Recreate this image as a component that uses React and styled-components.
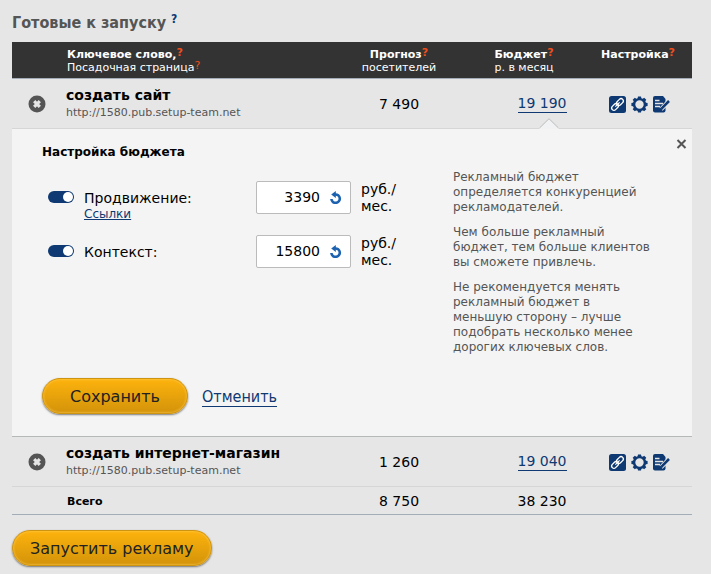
import React, { useState } from 'react'
import styled, { createGlobalStyle } from 'styled-components'

const GlobalStyle = createGlobalStyle`
  * {
    box-sizing: border-box;
  }
  body {
    background: #e6e6e6;
    color: #000;
    font-family: Verdana, 'DejaVu Sans', sans-serif;
    font-size: 14px;
    margin: 0;
  }
  button,
  input {
    font-family: inherit;
  }
`

const Page = styled.main`
  padding: 12px 19px 8px 12px;
`

const Title = styled.h1`
  color: #555;
  display: flex;
  font-family: Tahoma, 'DejaVu Sans Condensed', 'DejaVu Sans', sans-serif;
  font-size: 16px;
  gap: 5px;
  line-height: 22px;
  margin: 0 0 8px;
`

const TitleHelp = styled.sup`
  color: #0e3972;
  font-size: 12px;
  line-height: 14px;
`

const Help = styled.sup`
  color: #f04e1c;
  font-size: 11px;
  line-height: 0;
  vertical-align: 2px;
`

const Table = styled.table`
  border-collapse: collapse;
  table-layout: fixed;
  width: 100%;
`

const Col = styled.col`
  width: ${({ $width }) => $width};
`

const HeadCell = styled.th`
  background: #333;
  border-bottom: 1px solid #a3adb7;
  color: #fff;
  font-size: 11px;
  font-weight: bold;
  height: 36px;
  line-height: 13px;
  padding: 6px 0 0 ${({ $left }) => ($left ? '1px' : '0')};
  text-align: ${({ $left }) => ($left ? 'left' : 'center')};
  vertical-align: top;
  white-space: nowrap;
`

const SubHead = styled.div`
  font-weight: normal;
`

const Cell = styled.td`
  border-bottom: 1px solid ${({ $line }) => $line || '#d6d6d6'};
  height: ${({ $short }) => ($short ? '28px' : '50px')};
  padding: 2px 0 0 ${({ $budget }) => ($budget ? '36px' : '0')};
  position: relative;
  text-align: ${({ $left }) => ($left ? 'left' : 'center')};
  white-space: nowrap;
`

const Keyword = styled.div`
  font-size: 14px;
  font-weight: bold;
  line-height: 18px;
`

const PageUrl = styled.div`
  color: #555;
  font-size: 11px;
  line-height: 18px;
`

const TotalLabel = styled.div`
  font-size: 11px;
  font-weight: bold;
  padding-left: 1px;
`

const IconButton = styled.button`
  background: none;
  border: 0;
  cursor: pointer;
  display: block;
  padding: 0;
  > svg {
    display: block;
  }
`

const RemoveButton = styled(IconButton)`
  margin-left: 16px;
`

const Tools = styled.div`
  display: flex;
  gap: 5px;
  justify-content: center;
  padding-left: 3px;
`

const BudgetLink = styled.a`
  border-bottom: 1px solid #0e3972;
  color: #0e3972;
  display: inline-block;
  line-height: 17px;
  text-decoration: none;
`

const Pointer = styled.svg`
  bottom: -1px;
  display: block;
  left: 50%;
  margin-left: 15px;
  position: absolute;
`

const PanelCell = styled.td`
  background: #f4f4f4;
  border-bottom: 1px solid #b4b8b6;
  padding: 0;
`

const Panel = styled.form`
  padding: 10px 5px 22px 30px;
`

const PanelHead = styled.div`
  display: flex;
  justify-content: space-between;
`

const PanelTitle = styled.h2`
  font-size: 12px;
  line-height: 16px;
  margin: 5px 0 0;
`

const CloseButton = styled(IconButton)`
  height: 10px;
`

const PanelBody = styled.div`
  display: flex;
  gap: 46px;
  margin-top: 10px;
`

const Fields = styled.div`
  display: flex;
  flex-direction: column;
  gap: 14px;
  padding: 11px 0 0 6px;
  width: 365px;
`

const Field = styled.div`
  display: grid;
  grid-template-columns: 36px 172px 95px 1fr;
`

const Toggle = styled.input`
  appearance: none;
  background: #0e3972;
  border-radius: 6px;
  cursor: pointer;
  height: 12px;
  margin: 10px 0 0;
  padding: 1px;
  width: 26px;
  &::before {
    background: #fff;
    border-radius: 50%;
    content: '';
    display: block;
    height: 10px;
    margin-left: 0;
    width: 10px;
  }
  &:checked::before {
    margin-left: 14px;
  }
  &:not(:checked) {
    background: #999;
  }
`

const FieldName = styled.div`
  line-height: 17px;
  padding-top: 9px;
`

const SmallLink = styled.a`
  color: #0e3972;
  display: block;
  font-size: 12px;
  line-height: 14px;
`

const AmountBox = styled.div`
  align-items: center;
  background: #fff;
  border: 1px solid #bbb;
  border-radius: 2px;
  display: flex;
  gap: 10px;
  height: 33px;
  padding-right: 8px;
`

const Amount = styled.input`
  background: none;
  border: 0;
  flex: 1;
  font-size: 14px;
  min-width: 0;
  outline: none;
  padding: 0;
  text-align: right;
`

const Unit = styled.div`
  line-height: 17px;
  padding-left: 10px;
`

const Hints = styled.div`
  color: #555;
  flex: 1;
  font-size: 12px;
  line-height: 15px;
  max-width: 198px;
  > p {
    margin: 0 0 10px;
  }
`

const Actions = styled.div`
  align-items: center;
  display: flex;
  gap: 14px;
  margin-top: 13px;
`

const YellowButton = styled.button`
  background: linear-gradient(#fdb30d, #d3930a);
  border: 1px solid #cf940f;
  border-radius: 18px;
  box-shadow: 0 1px 2px rgba(0, 0, 0, 0.5), inset 0 0 2px 1px rgba(255, 205, 90, 0.5);
  color: #222;
  cursor: pointer;
  font-size: 16px;
  height: 36px;
  padding: 2px ${({ $wide }) => ($wide ? '27px' : '17px')} 0;
`

const CancelLink = styled.a`
  border-bottom: 1px solid #0e3972;
  color: #0e3972;
  font-family: Tahoma, 'DejaVu Sans Condensed', 'DejaVu Sans', sans-serif;
  font-size: 16px;
  line-height: 18px;
  margin-top: 3px;
  text-decoration: none;
`

const Launch = styled.div`
  margin-top: 15px;
`

const RemoveIcon = () => (
  <svg width="18" height="18" viewBox="0 0 18 18">
    <circle cx="9" cy="9" r="8.5" fill="#555" />
    <path d="M6.2 6.2l5.6 5.6M11.8 6.2l-5.6 5.6" stroke="#e6e6e6" strokeWidth="3.2" />
  </svg>
)

const CloseIcon = () => (
  <svg width="11" height="10" viewBox="0 0 11 10">
    <path d="M1.5 1l8 8M9.5 1l-8 8" stroke="#555" strokeWidth="2" />
  </svg>
)

const LinkIcon = () => (
  <svg width="17" height="17" viewBox="0 0 17 17">
    <rect width="17" height="17" rx="2.5" fill="#0e3972" />
    <g fill="none" stroke="#fff" strokeWidth="1.3" transform="rotate(-45 8.5 8.5)">
      <rect x="1.2" y="6.2" width="7.6" height="4.6" rx="2.3" />
      <rect x="8.2" y="6.2" width="7.6" height="4.6" rx="2.3" />
      <path d="M5.5 8.5h6" />
    </g>
  </svg>
)

const GearIcon = () => (
  <svg width="17" height="17" viewBox="0 0 17 17">
    <circle cx="8.5" cy="8.5" r="5.4" fill="none" stroke="#0e3972" strokeWidth="2.4" />
    <g fill="#0e3972">
      {[0, 45, 90, 135, 180, 225, 270, 315].map(angle => (
        <path key={angle} d="M6.5 3l.5-2.6h3l.5 2.6z" transform={`rotate(${angle} 8.5 8.5)`} />
      ))}
    </g>
  </svg>
)

const NoteIcon = () => (
  <svg width="17" height="17" viewBox="0 0 17 17">
    <path d="M2 0h8l2.5 3v11.5a2 2 0 0 1-2 2H2a2 2 0 0 1-2-2V2a2 2 0 0 1 2-2z" fill="#0e3972" />
    <path d="M2 4.5h4.5M2 7.5h8M2 10.5h5" stroke="#e6e6e6" strokeWidth="1.4" />
    <path d="M16.5 4.6L8 13.2" stroke="#e6e6e6" strokeWidth="4.4" />
    <path d="M16 5L8.3 12.8" stroke="#0e3972" strokeWidth="2.5" />
    <path d="M7.3 11.6l2.2 2.2-3.6 1.3z" fill="#0e3972" />
  </svg>
)

const ResetIcon = () => (
  <svg width="12" height="13" viewBox="0 0 12 13">
    <path d="M1.4 8A4.2 4.2 0 1 0 5 3.5" fill="none" stroke="#1c62b0" strokeWidth="2.6" />
    <path d="M1.2 3.5L5.8 0v7z" fill="#1c62b0" />
  </svg>
)

const BudgetField = ({ id, name, value, children }) => {
  const [amount, setAmount] = useState(value)
  return (
    <Field>
      <Toggle type="checkbox" role="switch" id={`${id}-on`} defaultChecked />
      <FieldName>
        <label htmlFor={`${id}-on`}>{name}</label>
        {children}
      </FieldName>
      <AmountBox>
        <Amount
          aria-label={name}
          value={amount}
          onChange={e => setAmount(e.target.value)}
        />
        <IconButton type="button" aria-label="Сбросить" onClick={() => setAmount(value)}>
          <ResetIcon />
        </IconButton>
      </AmountBox>
      <Unit>
        руб./
        <br />
        мес.
      </Unit>
    </Field>
  )
}

const KeywordRow = ({ keyword, visitors, budget, open }) => (
  <tr>
    <Cell $left>
      <RemoveButton type="button" aria-label="Удалить">
        <RemoveIcon />
      </RemoveButton>
    </Cell>
    <Cell $left>
      <Keyword>{keyword}</Keyword>
      <PageUrl>http://1580.pub.setup-team.net</PageUrl>
    </Cell>
    <Cell>{visitors}</Cell>
    <Cell $budget>
      <BudgetLink href="#budget">{budget}</BudgetLink>
      {open && (
        <Pointer width="20" height="11" viewBox="0 0 20 11">
          <path d="M0 10.5L10 .7l10 9.8V11H0z" fill="#f1f2f3" />
          <path d="M.5 10L10 .7l9.5 9.3" fill="none" stroke="#bbb" />
        </Pointer>
      )}
    </Cell>
    <Cell>
      <Tools>
        <IconButton type="button" aria-label="Ссылка">
          <LinkIcon />
        </IconButton>
        <IconButton type="button" aria-label="Параметры">
          <GearIcon />
        </IconButton>
        <IconButton type="button" aria-label="Редактировать">
          <NoteIcon />
        </IconButton>
      </Tools>
    </Cell>
  </tr>
)

const BudgetPanel = () => (
  <Panel id="budget" onSubmit={e => e.preventDefault()}>
    <PanelHead>
      <PanelTitle>Настройка бюджета</PanelTitle>
      <CloseButton type="button" aria-label="Закрыть">
        <CloseIcon />
      </CloseButton>
    </PanelHead>
    <PanelBody>
      <Fields>
        <BudgetField id="promo" name="Продвижение:" value="3390">
          <SmallLink href="#links">Ссылки</SmallLink>
        </BudgetField>
        <BudgetField id="context" name="Контекст:" value="15800" />
      </Fields>
      <Hints>
        <p>Рекламный бюджет определяется конкуренцией рекламодателей.</p>
        <p>Чем больше рекламный бюджет, тем больше клиентов вы сможете привлечь.</p>
        <p>
          Не рекомендуется менять рекламный бюджет в меньшую сторону – лучше
          подобрать несколько менее дорогих ключевых слов.
        </p>
      </Hints>
    </PanelBody>
    <Actions>
      <YellowButton $wide>Сохранить</YellowButton>
      <CancelLink href="#cancel">Отменить</CancelLink>
    </Actions>
  </Panel>
)

const App = () => (
  <Page>
    <GlobalStyle />
    <Title>
      Готовые к запуску <TitleHelp>?</TitleHelp>
    </Title>
    <Table>
      <colgroup>
        <Col $width="54px" />
        <Col />
        <Col $width="130px" />
        <Col $width="120px" />
        <Col $width="108px" />
      </colgroup>
      <thead>
        <tr>
          <HeadCell />
          <HeadCell $left>
            Ключевое слово,<Help>?</Help>
            <SubHead>
              Посадочная страница<Help>?</Help>
            </SubHead>
          </HeadCell>
          <HeadCell>
            Прогноз<Help>?</Help>
            <SubHead>посетителей</SubHead>
          </HeadCell>
          <HeadCell>
            Бюджет<Help>?</Help>
            <SubHead>р. в месяц</SubHead>
          </HeadCell>
          <HeadCell>
            Настройка<Help>?</Help>
          </HeadCell>
        </tr>
      </thead>
      <tbody>
        <KeywordRow keyword="создать сайт" visitors="7 490" budget="19 190" open />
        <tr>
          <PanelCell colSpan={5}>
            <BudgetPanel />
          </PanelCell>
        </tr>
        <KeywordRow keyword="создать интернет-магазин" visitors="1 260" budget="19 040" />
        <tr>
          <Cell $short $line="#a3adb7" />
          <Cell $short $left $line="#a3adb7">
            <TotalLabel>Всего</TotalLabel>
          </Cell>
          <Cell $short $line="#a3adb7">8 750</Cell>
          <Cell $short $budget $line="#a3adb7">
            38 230
          </Cell>
          <Cell $short $line="#a3adb7" />
        </tr>
      </tbody>
    </Table>
    <Launch>
      <YellowButton type="button">Запустить рекламу</YellowButton>
    </Launch>
  </Page>
)

export default App
